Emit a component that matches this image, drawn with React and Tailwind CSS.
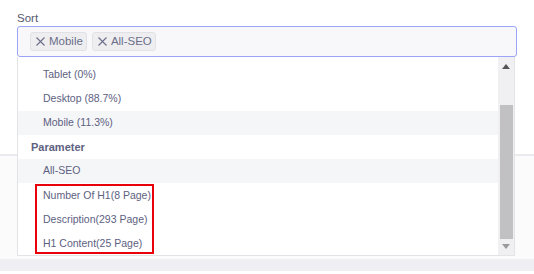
const DEVICE = ['Tablet (0%)', 'Desktop (88.7%)', 'Mobile (11.3%)']
const PARAMS = ['Number Of H1(8 Page)', 'Description(293 Page)', 'H1 Content(25 Page)']

function Tag({ label }) {
  return (
    <span className="flex items-center gap-[4px] h-[19px] pl-[5px] pr-[3px] rounded-[3px] border border-[#e2e2e6] bg-[#eeeef1] text-[11.5px] text-[#6b6f88]">
      <svg width="9" height="9" viewBox="0 0 9 9" fill="none" stroke="#6b6f88" strokeWidth="1.1">
        <path d="M0.5 0.5 L8.5 8.5 M8.5 0.5 L0.5 8.5" />
      </svg>
      {label}
    </span>
  )
}

function Row({ children, active }) {
  return (
    <div className={`h-[24px] flex items-center pl-[25px] text-[10.5px] text-[#5d6181] ${active ? 'bg-[#f5f6f8]' : ''}`}>
      {children}
    </div>
  )
}

export default function App() {
  return (
    <div className="relative w-[534px] h-[274px] overflow-hidden bg-white" style={{ fontFamily: '"Liberation Sans", Arial, sans-serif' }}>
      {/* page behind the menu */}
      <div className="flex flex-col">
        <div className="px-[17px] pt-[11px]">
          <div className="text-[11.5px] leading-[14px] text-[#555a6e] mb-[1px]">Sort</div>
          <div className="h-[31px] flex items-center gap-[5px] pl-[12px] rounded-[3px] border border-[#9aa5f7] bg-[#f8f8fa]">
            <Tag label="Mobile" />
            <Tag label="All-SEO" />
          </div>
        </div>
        <div className="h-[97px]" />
        <div className="h-[2px] bg-[#ebebef]" />
        <div className="h-[103px] bg-[#fbfbfc]" />
        <div className="h-[12px] bg-[#efeef2]" />
        <div className="flex-1 bg-[#f9f9fa]" />
      </div>

      {/* dropdown menu */}
      <div className="absolute top-[57px] left-[17px] w-[498px] h-[199px] flex bg-white border border-t-0 border-[#e3e3e7]">
        <div className="flex-1 flex flex-col pt-[6px]">
          {DEVICE.map((d) => (
            <Row key={d} active={d.startsWith('Mobile')}>{d}</Row>
          ))}
          <div className="h-[24px] flex items-center pl-[13px] text-[11px] font-bold text-[#5d6181]">Parameter</div>
          <Row active>All-SEO</Row>
          <div className="ml-[17px] mt-[1px] w-[119px] h-[70px] border-2 border-[#e8000a]">
            <div className="-mt-[2px] flex flex-col">
              {PARAMS.map((p) => (
                <div key={p} className="h-[24px] flex items-center pl-[6px] text-[10.5px] text-[#5d6181]">{p}</div>
              ))}
            </div>
          </div>
        </div>
        <div className="w-[16px] bg-[#f0f0f2] flex flex-col items-center pt-[7px] pb-[6px]">
          <svg width="8" height="5" viewBox="0 0 8 5"><path d="M0 5 L4 0 L8 5 Z" fill="#555" /></svg>
          <div className="mt-[36px] w-[13px] h-[134px] bg-[#c1c1c3]" />
          <div className="flex-1" />
          <svg width="8" height="5" viewBox="0 0 8 5"><path d="M0 0 L4 5 L8 0 Z" fill="#9a9a9e" /></svg>
        </div>
      </div>
    </div>
  )
}
